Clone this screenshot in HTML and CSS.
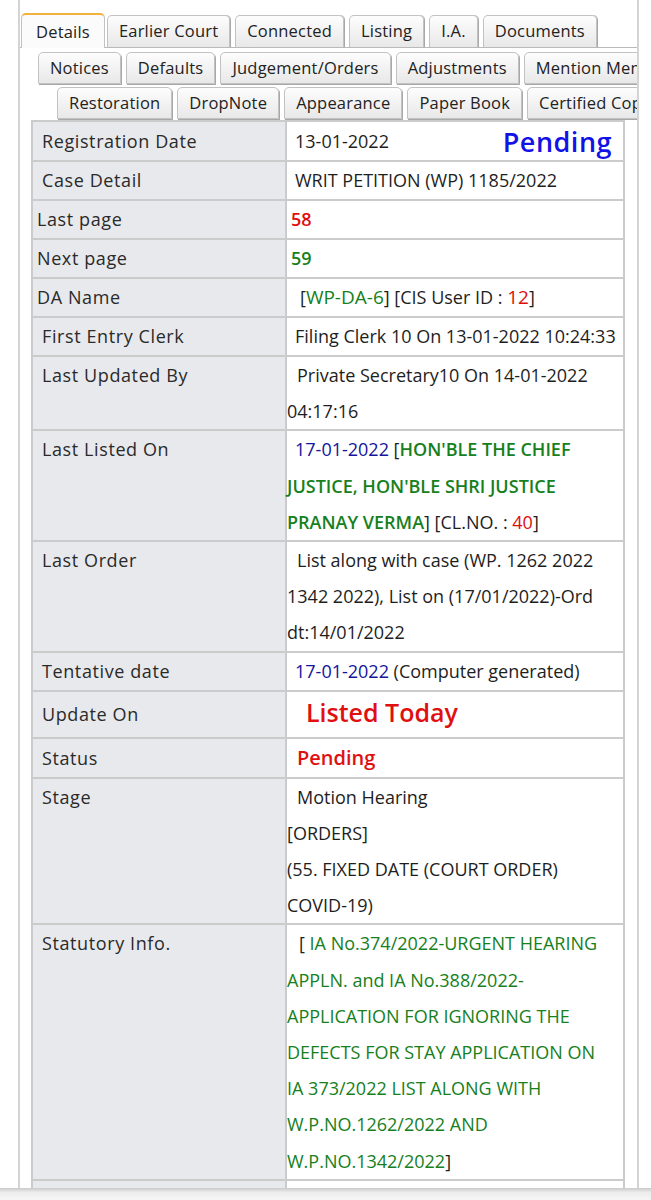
FILE: index.html
```html
<!DOCTYPE html>
<html lang="en">
<head>
<meta charset="utf-8">
<title>Case Details</title>
<link rel="stylesheet" href="styles.css">
</head>
<body>
<div class="panel">
  <div class="tabrow row1">
    <div class="tab active">Details</div>
    <div class="tab">Earlier Court</div>
    <div class="tab">Connected</div>
    <div class="tab">Listing</div>
    <div class="tab">I.A.</div>
    <div class="tab">Documents</div>
  </div>
  <div class="tabrow row2">
    <div class="tab">Notices</div>
    <div class="tab">Defaults</div>
    <div class="tab">Judgement/Orders</div>
    <div class="tab">Adjustments</div>
    <div class="tab">Mention Memo</div>
  </div>
  <div class="tabrow row3">
    <div class="tab">Restoration</div>
    <div class="tab">DropNote</div>
    <div class="tab">Appearance</div>
    <div class="tab">Paper Book</div>
    <div class="tab">Certified Copy</div>
  </div>

  <div class="grid">
    <div class="lbl reg-l">Registration Date</div>
    <div class="val reg"><span>13-01-2022</span><span class="big-blue">Pending</span></div>

    <div class="lbl">Case Detail</div>
    <div class="val">WRIT PETITION (WP) 1185/2022</div>

    <div class="lbl tight">Last page</div>
    <div class="val i4"><span class="red b">58</span></div>

    <div class="lbl tight">Next page</div>
    <div class="val i4"><span class="green b">59</span></div>

    <div class="lbl tight">DA Name</div>
    <div class="val i13">[<span class="green lg">WP-DA-6</span>] [CIS User ID : <span class="red lg">12</span>]</div>

    <div class="lbl">First Entry Clerk</div>
    <div class="val">Filing Clerk 10 On 13-01-2022 10:24:33</div>

    <div class="lbl">Last Updated By</div>
    <div class="val i10">Private Secretary10 On 14-01-2022<br>04:17:16</div>

    <div class="lbl">Last Listed On</div>
    <div class="val"><span class="navy">17-01-2022</span> [<span class="green sb">HON'BLE THE CHIEF<br>JUSTICE, HON'BLE SHRI JUSTICE<br>PRANAY VERMA</span>] [CL.NO. : <span class="red">40</span>]</div>

    <div class="lbl">Last Order</div>
    <div class="val i10">List along with case (WP. 1262 2022<br>1342 2022), List on (17/01/2022)-Ord<br>dt:14/01/2022</div>

    <div class="lbl">Tentative date</div>
    <div class="val"><span class="navy">17-01-2022</span> (Computer generated)</div>

    <div class="lbl tall">Update On</div>
    <div class="val tall i19"><span class="listed">Listed Today</span></div>

    <div class="lbl mid">Status</div>
    <div class="val mid i10"><span class="status">Pending</span></div>

    <div class="lbl">Stage</div>
    <div class="val i10">Motion Hearing<br>[ORDERS]<br>(55. FIXED DATE (COURT ORDER)<br>COVID-19)</div>

    <div class="lbl">Statutory Info.</div>
    <div class="val i12">[ <span class="green">IA No.374/2022-URGENT HEARING<br>APPLN. and IA No.388/2022-<br>APPLICATION FOR IGNORING THE<br>DEFECTS FOR STAY APPLICATION ON<br>IA 373/2022 LIST ALONG WITH<br>W.P.NO.1262/2022 AND<br>W.P.NO.1342/2022</span>]</div>

    <div class="lbl"></div>
    <div class="val"></div>
  </div>
</div>
<div class="navbar"></div>
</body>
</html>
```

FILE: styles.css
```css
html, body {
  margin: 0;
  padding: 0;
  background: #ffffff;
}

body {
  font-family: "Open Sans", "Noto Sans", sans-serif;
  color: #1e1e1e;
  height: 1200px;
  overflow: hidden;
}

.panel {
  margin-left: 18px;
  width: 621px;
  box-sizing: border-box;
  border-left: 2px solid #d4d4d4;
  border-right: 2px solid #d4d4d4;
  padding-top: 13px;
  overflow: hidden;
  min-height: 1200px;
}

.tabrow {
  display: flex;
  gap: 5px;
  white-space: nowrap;
}

.row1 {
  height: 34px;
  align-items: flex-end;
  padding-left: 1px;
  border-bottom: 1px solid #b9b9b9;
}

.row2 {
  margin-top: 4px;
  padding-left: 18px;
}

.row3 {
  margin-top: 3px;
  padding-left: 37px;
}

.tab {
  flex: none;
  box-sizing: border-box;
  height: 32px;
  line-height: 30px;
  padding: 0 11px;
  font-size: 16.5px;
  letter-spacing: 0.2px;
  color: #222;
  border: 1px solid #c2c2c2;
  border-radius: 5px 5px 0 0;
  background: linear-gradient(#fdfdfd, #e8e8e8);
  box-shadow: 1px 1px 0 #a8a8a8;
}

.row1 .tab {
  border-bottom: none;
  box-shadow: 1px 0 0 #a8a8a8;
}

.row1 .tab.active {
  height: 35px;
  margin-bottom: -1px;
  margin-right: -3px;
  border-top: 2px solid #f2b13c;
  background: #fbfbfb;
  box-shadow: none;
  line-height: 33px;
  padding: 0 14px;
}

.grid {
  margin: 1px 0 0 11px;
  width: 594px;
  box-sizing: border-box;
  display: grid;
  grid-template-columns: 252px 1fr;
  gap: 2px;
  background: #cbcbcb;
  border: 2px solid #cbcbcb;
  font-size: 18px;
  line-height: 36.2px;
}

.lbl {
  background: #e8e9ec;
  padding-left: 9px;
  color: #2a2a2a;
  letter-spacing: 0.6px;
  min-height: 37px;
}

.lbl.tight {
  padding-left: 4px;
}

.lbl.reg-l {
  line-height: 38px;
}

.val {
  background: #ffffff;
  white-space: nowrap;
  text-indent: 8px;
  min-height: 37px;
}

.val.i4 { text-indent: 4px; }
.val.i10 { text-indent: 10px; }
.val.i12 { text-indent: 12px; }
.val.i13 { text-indent: 13px; }
.val.i19 { text-indent: 19px; }

.val.reg {
  display: flex;
  align-items: center;
  justify-content: space-between;
  padding: 0 11px 0 8px;
  text-indent: 0;
  height: 38px;
  min-height: 0;
}

.big-blue {
  font-size: 27px;
  color: #1212e6;
  font-weight: 600;
  letter-spacing: 0.5px;
  line-height: 1;
}

.tall {
  height: 45px;
  line-height: 45px;
}

.mid {
  height: 38px;
  line-height: 38px;
}

.red { color: #e00d0d; }
.green { color: #16801c; }
.navy { color: #14149c; }
.b { font-weight: 600; }
.sb { font-weight: 600; }
.lg { font-size: 19px; line-height: 1; }

.listed {
  font-size: 25px;
  line-height: 1;
  color: #e01010;
  font-weight: 600;
  vertical-align: -1px;
}

.status {
  font-size: 20px;
  line-height: 1;
  color: #e01010;
  font-weight: 600;
}

.navbar {
  position: fixed;
  left: 0;
  right: 0;
  bottom: 0;
  height: 12px;
  background: linear-gradient(#c9c9c9, #ececec 35%, #f6f6f6);
}
```
